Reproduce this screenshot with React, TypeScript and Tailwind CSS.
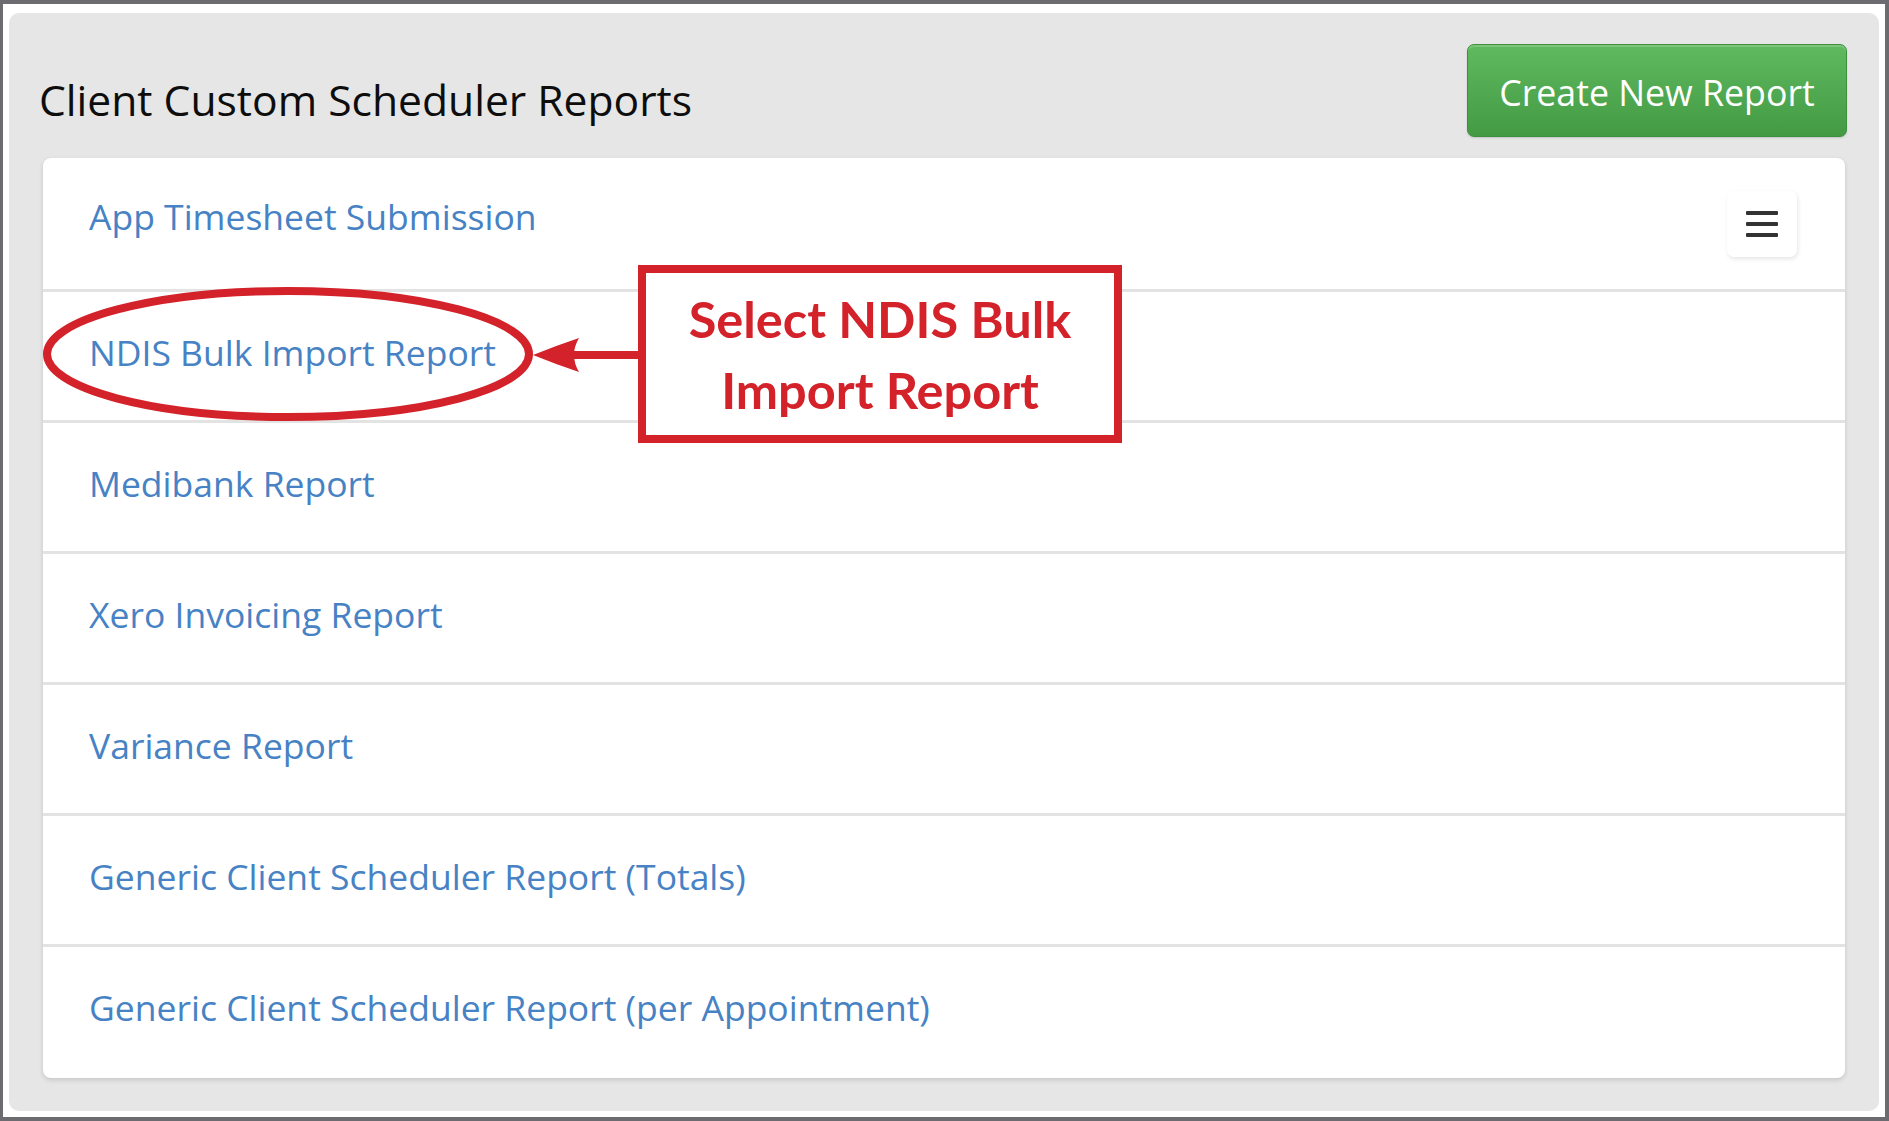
const reports = [
  'App Timesheet Submission',
  'NDIS Bulk Import Report',
  'Medibank Report',
  'Xero Invoicing Report',
  'Variance Report',
  'Generic Client Scheduler Report (Totals)',
  'Generic Client Scheduler Report (per Appointment)',
]

const MenuButton = () => (
  <div className="flex h-[66px] w-[70px] flex-col items-center justify-center gap-[7px] rounded-[7px] bg-white shadow-[1px_2px_4px_rgba(0,0,0,0.10)]">
    <span className="block h-[4px] w-[32px] rounded-[1px] bg-[#333]" />
    <span className="block h-[4px] w-[32px] rounded-[1px] bg-[#333]" />
    <span className="block h-[4px] w-[32px] rounded-[1px] bg-[#333]" />
  </div>
)

// red annotation drawn over the list
const Annotation = () => (
  <>
    <svg
      className="pointer-events-none absolute left-0 top-[100px]"
      width="600"
      height="180"
      viewBox="0 0 600 180"
    >
      <ellipse cx="245" cy="96" rx="241" ry="63" fill="none" stroke="#d3222a" strokeWidth="8" />
      <rect x="525" y="93" width="75" height="8" fill="#d3222a" />
      <path d="M490 97 Q512 88 536 80 Q526 97 536 114 Q512 106 490 97 Z" fill="#d3222a" />
    </svg>
    <div className="absolute left-[595px] top-[107px] flex h-[178px] w-[484px] flex-col items-center justify-center border-[8px] border-[#d3222a] bg-white font-['Lato',sans-serif] text-[50.5px] font-bold leading-[71px] text-[#d3222a]">
      <span className="block whitespace-nowrap">Select NDIS Bulk</span>
      <span className="block whitespace-nowrap">Import Report</span>
    </div>
  </>
)

export default function App() {
  return (
    <div className="h-[1121px] w-[1889px] border-[4px] border-l-[3px] border-[#6b6b70] bg-white pb-[6px] pl-[6px] pr-[6px] pt-[9px] font-['Open_Sans',sans-serif]">
      <div className="h-full rounded-[10px] bg-[#e6e6e6] px-[34px]">
        {/* Header */}
        <div className="flex items-start justify-between">
          <h1 className="-ml-[4px] mt-[63px] text-[42.6px] font-normal leading-[46px] text-[#0d0d0d]">
            Client Custom Scheduler Reports
          </h1>
          <button className="-mr-[2px] mt-[31px] flex h-[93px] w-[380px] items-center justify-center rounded-[7px] border border-[#3e8f3e] bg-linear-to-b from-[#5fba5f] to-[#439a43] pt-[5px] text-[35.7px] text-white shadow-[inset_0_2px_0_rgba(255,255,255,0.18),0_1px_2px_rgba(0,0,0,0.15)]">
            Create New Report
          </button>
        </div>

        {/* Report list */}
        <div className="relative mt-[21px] rounded-[8px] bg-white shadow-[0_2px_5px_rgba(0,0,0,0.14)]">
          {reports.map((name, i) => (
            <div
              key={name}
              className={`flex items-start justify-between pl-[46px] pr-[48px] ${
                i === 0 ? 'h-[134px] pt-[33px]' : 'h-[131px] pt-[35px]'
              } ${i < reports.length - 1 ? 'border-b-[3px] border-[#e3e3e3]' : 'h-[129px]'}`}
            >
              <a className="block cursor-pointer whitespace-nowrap text-[35.5px] leading-[50px] text-[#4682c4]">
                {name}
              </a>
              {i === 0 && <MenuButton />}
            </div>
          ))}
          <Annotation />
        </div>
      </div>
    </div>
  )
}
